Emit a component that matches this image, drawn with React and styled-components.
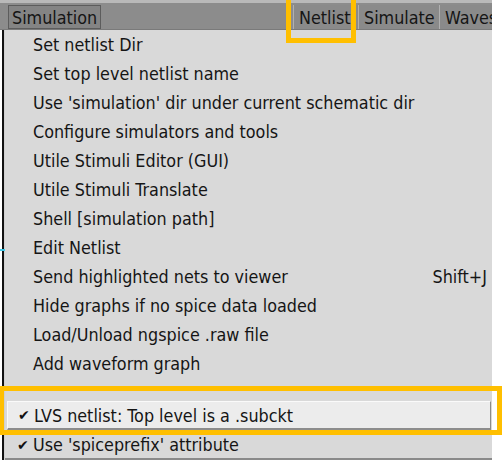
import React from "react";
import styled, { createGlobalStyle } from "styled-components";

const GlobalStyle = createGlobalStyle`
  body {
    margin: 0;
    background: #ffffff;
    font-family: "DejaVu Sans Condensed", "DejaVu Sans", "Liberation Sans", sans-serif;
  }
`;

const Screen = styled.div`
  position: relative;
  width: 503px;
  height: 461px;
  overflow: hidden;
  background: #ffffff;
`;

const MenuBar = styled.div`
  display: flex;
  align-items: stretch;
  height: 26px;
  width: 484px;
  border-top: 3px solid #b9b9b9;
  border-bottom: 1px solid #7a7a7a;
  background: #8c8c8c;
  padding-left: 8px;
  box-sizing: content-box;
  overflow: hidden;
`;

const BarButton = styled.div`
  display: flex;
  align-items: center;
  flex-shrink: 0;
  box-sizing: border-box;
  width: ${(p) => p.$w}px;
  margin-top: 2px;
  padding-left: ${(p) => (p.$open ? "3px" : "5px")};
  font-size: 17.8px;
  color: #151515;
  background: ${(p) => (p.$open ? "#848484" : "#8a8a8a")};
  border: ${(p) => (p.$open ? "1px solid #5c5c5c" : "none")};
  border-left: ${(p) => (p.$open ? "1px solid #5c5c5c" : "1px solid #b0b0b0")};
  white-space: nowrap;
  overflow: hidden;
`;

const Gap = styled.div`
  width: 192px;
  flex-shrink: 0;
`;

const Body = styled.div`
  display: flex;
`;

const WindowEdge = styled.div`
  width: 5px;
  box-sizing: border-box;
  border-left: 2px solid #ffffff;
  background: #111111;
  border-right: 1px solid #d0d0d0;
`;

const Dropdown = styled.div`
  width: 487px;
  height: 430px;
  box-sizing: border-box;
  background: #d9d9d9;
  border-bottom: 2px solid #8a8a8a;
  display: flex;
  flex-direction: column;
`;

const Item = styled.div`
  display: flex;
  align-items: center;
  height: 29px;
  flex-shrink: 0;
  box-sizing: border-box;
  margin: ${(p) => (p.$active ? "0 1px 0 2px" : "0")};
  padding: 0 5px 0 ${(p) => (p.$active ? "10px" : "12px")};
  font-size: 17.8px;
  color: #151515;
  background: ${(p) => (p.$active ? "#ececec" : "transparent")};
  border: ${(p) => (p.$active ? "1px solid #fafafa" : "none")};
  border-right-color: #8c8c8c;
  border-bottom: ${(p) => (p.$active ? "2px solid #8c8c8c" : "none")};
  white-space: nowrap;
`;

const Mark = styled.span`
  width: 16px;
  font-family: "DejaVu Sans", sans-serif;
  font-size: 14px;
  font-weight: bold;
  color: #111111;
`;

const Label = styled.span`
  flex: 1;
`;

const Accel = styled.span`
  padding-right: 0;
`;

const Separator = styled.div`
  height: 23px;
  flex-shrink: 0;
`;

const Callout = styled.div`
  position: absolute;
  box-sizing: border-box;
  border: 5px solid #ffbf00;
  pointer-events: none;
`;

const Tick = styled.div`
  position: absolute;
  left: 0;
  top: 249px;
  width: 5px;
  height: 2px;
  background: #3fc8e8;
`;

const items = [
  { label: "Set netlist Dir" },
  { label: "Set top level netlist name" },
  { label: "Use 'simulation' dir under current schematic dir" },
  { label: "Configure simulators and tools" },
  { label: "Utile Stimuli Editor (GUI)" },
  { label: "Utile Stimuli Translate" },
  { label: "Shell [simulation path]" },
  { label: "Edit Netlist" },
  { label: "Send highlighted nets to viewer", accel: "Shift+J" },
  { label: "Hide graphs if no spice data loaded" },
  { label: "Load/Unload ngspice .raw file" },
  { label: "Add waveform graph" },
];

const checks = [
  { label: "LVS netlist: Top level is a .subckt", active: true },
  { label: "Use 'spiceprefix' attribute" },
];

export default function App() {
  return (
    <Screen>
      <GlobalStyle />
      <MenuBar>
        <BarButton $open $w={93}>Simulation</BarButton>
        <Gap />
        <BarButton $w={65}>Netlist</BarButton>
        <BarButton $w={81}>Simulate</BarButton>
        <BarButton $w={70}>Waves</BarButton>
      </MenuBar>
      <Body>
        <WindowEdge />
        <Dropdown>
          {items.map((it) => (
            <Item key={it.label}>
              <Mark />
              <Label>{it.label}</Label>
              {it.accel && <Accel>{it.accel}</Accel>}
            </Item>
          ))}
          <Separator />
          {checks.map((it) => (
            <Item key={it.label} $active={it.active}>
              <Mark>✔</Mark>
              <Label>{it.label}</Label>
            </Item>
          ))}
        </Dropdown>
      </Body>
      <Tick />
      <Callout style={{ left: 286, top: -6, width: 70, height: 49 }} />
      <Callout style={{ left: -1, top: 386, width: 503, height: 49 }} />
    </Screen>
  );
}
